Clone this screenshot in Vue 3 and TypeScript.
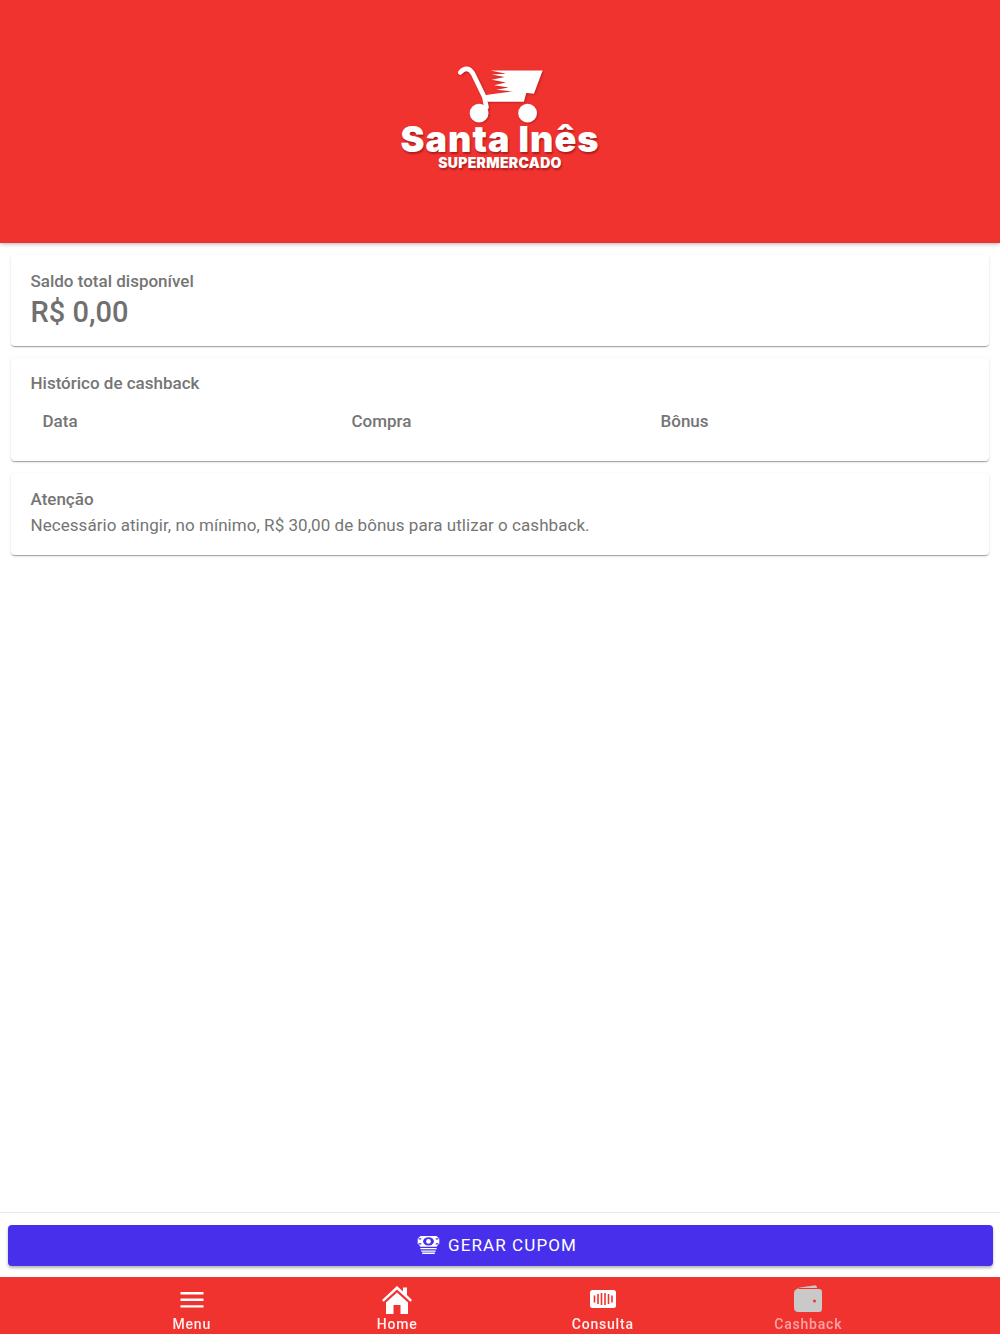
<script setup lang="ts">
interface NavItem {
  label: string
  icon: 'menu' | 'home' | 'consulta' | 'cashback'
  muted?: boolean
}

const navItems: NavItem[] = [
  { label: 'Menu', icon: 'menu' },
  { label: 'Home', icon: 'home' },
  { label: 'Consulta', icon: 'consulta' },
  { label: 'Cashback', icon: 'cashback', muted: true },
]

const columns = ['Data', 'Compra', 'Bônus']
</script>

<template>
  <div class="page">
    <header class="header">
      <div class="logo">
        <svg class="cart" viewBox="225 40 275 185" fill="#fff">
          <path d="M244 68 C256 52 272 54 282 72 L316 142 L322 172" fill="none" stroke="#fff" stroke-width="14" stroke-linecap="round" stroke-linejoin="round" />
          <path d="M334 62 L490 62 L464 132 L352 120 L388 113 L345 106 L380 98 L338 90 L376 82 L338 74 L380 72 Z" />
          <path d="M316 136 L444 118 L434 156 L326 156 Z" />
          <circle cx="300" cy="190" r="28" />
          <circle cx="445" cy="190" r="28" />
        </svg>
        <div class="logo-name">Santa Inês</div>
        <div class="logo-sub">SUPERMERCADO</div>
      </div>
    </header>

    <main class="content">
      <section class="card balance">
        <p class="card-title">Saldo total disponível</p>
        <p class="amount">R$ 0,00</p>
      </section>

      <section class="card history">
        <p class="card-title">Histórico de cashback</p>
        <div class="table-head">
          <span v-for="col in columns" :key="col">{{ col }}</span>
        </div>
      </section>

      <section class="card notice">
        <p class="card-title">Atenção</p>
        <p class="notice-text">Necessário atingir, no mínimo, R$ 30,00 de bônus para utlizar o cashback.</p>
      </section>
    </main>

    <footer class="footer">
      <div class="action">
        <button type="button" class="coupon">
          <svg class="coupon-icon" viewBox="0 0 24 20" fill="#fff">
            <path d="M3 0H21L24 3V8L21 12H3L0 8V3Z" />
            <ellipse cx="12" cy="6" rx="6" ry="4.6" fill="#472fec" />
            <circle cx="12" cy="6" r="2.6" />
            <path d="M1 2.5H4V4H1ZM20 2.5H23V4H20ZM1 8H4V9.5H1ZM20 8H23V9.5H20Z" fill="#472fec" />
            <path d="M3 13.2H21V14.8H3ZM4 16H20V17.4H4ZM5 18.4H19V20H5Z" />
          </svg>
          <span>GERAR CUPOM</span>
        </button>
      </div>

      <nav class="nav">
        <div v-for="item in navItems" :key="item.label" class="nav-item" :class="{ muted: item.muted }">
          <svg v-if="item.icon === 'menu'" class="nav-icon" viewBox="0 0 30 30" fill="#fff">
            <path d="M3.500 7H26.500V9.400H3.500ZM3.500 13.600H26.500V16H3.500ZM3.500 20.200H26.500V22.600H3.500Z" />
          </svg>
          <svg v-else-if="item.icon === 'home'" class="nav-icon" viewBox="0 0 30 30" fill="#fff">
            <path d="M15 1 L21 6.5 V2.5 H25 V10 L30 15 L28.4 16.8 L15 4.6 L1.6 16.8 L0 15 Z" />
            <path d="M15 7.5 L26 17.5 V29 H18.5 V20 H11.5 V29 H4 V17.5 Z" />
          </svg>
          <svg v-else-if="item.icon === 'consulta'" class="nav-icon" viewBox="0 0 30 30">
            <rect x="2" y="5" width="26" height="18" rx="2.5" fill="#fff" />
            <path d="M6.5 10.500v7M10 9v10M13.500 8v12M17 8v12M20.500 9v10M24 10.500v7" stroke="#f13330" stroke-width="1.6" fill="none" />
          </svg>
          <svg v-else class="nav-icon" viewBox="0 0 30 30" fill="#c9c9c9">
            <path d="M3 7 C3 4 5 3 7 2.6 L21 0.4 C23 0.2 24 1 24 3 H6 Z" />
            <path d="M1 8 C1 5.500 3 4 5 4 H26 C28 4 29 5 29 7 V24 C29 26 28 27 26 27 H5 C3 27 1 25.500 1 23 Z" />
            <circle cx="21.500" cy="16" r="1.500" fill="#f13330" />
          </svg>
          <span class="nav-label">{{ item.label }}</span>
        </div>
      </nav>
    </footer>
  </div>
</template>

<style>
html,
body {
  margin: 0;
  background: #fff;
}
</style>

<style scoped>
.page {
  display: flex;
  flex-direction: column;
  height: 1334px;
  overflow: hidden;
  font-family: Roboto, 'Liberation Sans', sans-serif;
  color: #757575;
}

.header {
  height: 243px;
  flex: none;
  display: flex;
  justify-content: center;
  background: #f13330;
  box-shadow: 0 1px 4px rgba(0, 0, 0, 0.3);
}

.logo {
  display: flex;
  flex-direction: column;
  align-items: center;
  padding-top: 63px;
  color: #fff;
  text-shadow: 1px 2px 2px rgba(90, 0, 0, 0.45);
}

.cart {
  width: 92px;
  height: 62px;
  filter: drop-shadow(1px 1px 1px rgba(90, 0, 0, 0.35));
}

.logo-name {
  margin-top: -3px;
  font-family: Inter, 'Open Sans', sans-serif;
  font-weight: 900;
  font-size: 36px;
  line-height: 34px;
  letter-spacing: 1px;
  white-space: nowrap;
}

.logo-sub {
  font-family: Inter, 'Open Sans', sans-serif;
  font-weight: 900;
  font-size: 14px;
  line-height: 14px;
  letter-spacing: 0.3px;
}

.content {
  flex: 1;
  display: flex;
  flex-direction: column;
  gap: 12px;
  padding: 12px 11px 0 11px;
}

.card {
  padding: 16px 19.5px;
  border-radius: 4px;
  background: #fff;
  box-shadow:
    0 2px 1px -1px rgba(0, 0, 0, 0.2),
    0 1px 1px 0 rgba(0, 0, 0, 0.14),
    0 1px 3px 0 rgba(0, 0, 0, 0.12);
}

.card-title {
  margin: 0;
  font-weight: 500;
  font-size: 17px;
  line-height: 20px;
}

.balance {
  height: 91px;
  box-sizing: border-box;
}

.amount {
  margin: 3px 0 0;
  font-weight: 500;
  font-size: 29px;
  line-height: 36px;
  color: #707070;
}

.history {
  height: 103px;
  padding-top: 15px;
  box-sizing: border-box;
}

.table-head {
  display: grid;
  grid-template-columns: repeat(3, 309px);
  padding: 18px 0 0 12px;
  font-weight: 500;
  font-size: 17px;
  line-height: 20px;
}

.notice {
  height: 82px;
  box-sizing: border-box;
}

.notice-text {
  margin: 6px 0 0;
  font-size: 17px;
  line-height: 20px;
  letter-spacing: 0.05px;
}

.footer {
  flex: none;
}

.action {
  padding: 12px 7px 11px 8px;
  border-top: 1px solid #e8e8e8;
}

.coupon {
  width: 100%;
  height: 41px;
  display: flex;
  align-items: center;
  justify-content: center;
  gap: 8px;
  padding: 0 7px 1px 0;
  border: none;
  border-radius: 4px;
  background: #472fec;
  color: #fff;
  font-family: inherit;
  font-size: 17px;
  font-weight: 400;
  letter-spacing: 1.1px;
  box-shadow: 0 2px 3px rgba(0, 0, 0, 0.3);
}

.coupon-icon {
  width: 23px;
  height: 18px;
}

.nav {
  height: 57px;
  display: grid;
  grid-template-columns: repeat(4, 205.5px);
  justify-content: center;
  background: #f13330;
}

.nav-item {
  display: flex;
  flex-direction: column;
  align-items: center;
  padding-top: 8px;
  color: #fff;
}

.nav-item.muted {
  color: rgba(255, 255, 255, 0.6);
}

.nav-icon {
  width: 30px;
  height: 30px;
}

.nav-label {
  font-size: 14px;
  font-weight: 500;
  line-height: 18px;
  letter-spacing: 0.8px;
  opacity: 0.92;
}
</style>
